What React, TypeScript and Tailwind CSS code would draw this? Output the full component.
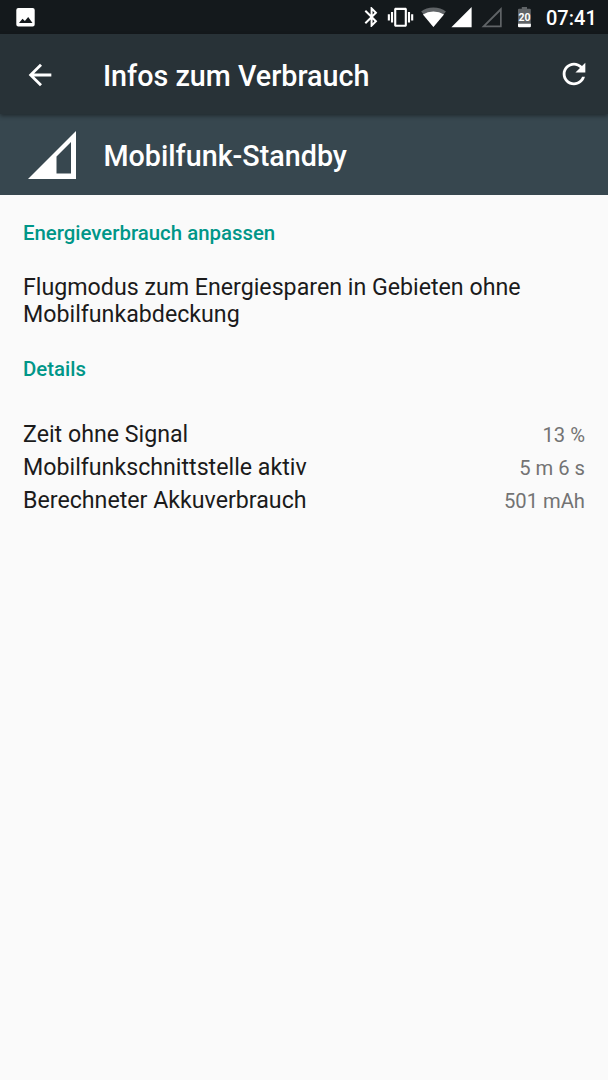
const details = [
  { label: "Zeit ohne Signal", value: "13 %" },
  { label: "Mobilfunkschnittstelle aktiv", value: "5 m 6 s" },
  { label: "Berechneter Akkuverbrauch", value: "501 mAh" },
];

const StatusBar = () => (
  <div className="h-[34px] bg-[#14191c]">
    <svg width="608" height="34" viewBox="0 0 608 34" fill="#fff">
      {/* screenshot notification */}
      <path
        fillRule="evenodd"
        d="M18.3 8h14.4a2 2 0 0 1 2 2v14.4a2 2 0 0 1-2 2H18.3a2 2 0 0 1-2-2V10a2 2 0 0 1 2-2zM19 23h13.5l-4.3-6-3.3 4-2.4-2.3z"
      />
      {/* bluetooth */}
      <path
        transform="translate(359.6 5)"
        d="M17.71 7.71L12 2h-1v7.59L6.41 5 5 6.41 10.59 12 5 17.59 6.41 19 11 14.41V22h1l5.71-5.71-4.3-4.29 4.3-4.29zM13 5.83l1.88 1.88L13 9.59V5.83zm1.88 10.46L13 18.17v-3.76l1.88 1.88z"
      />
      {/* vibrate */}
      <path
        transform="translate(387.8 4.6) scale(1.06)"
        d="M0 15h2V9H0v6zm3 2h2V7H3v10zm19-8v6h2V9h-2zm-3 8h2V7h-2v10zM16.5 3h-9C6.67 3 6 3.67 6 4.5v15c0 .83.67 1.5 1.5 1.5h9c.83 0 1.5-.67 1.5-1.5v-15c0-.83-.67-1.5-1.5-1.5zM16 19H8V5h8v14z"
      />
      {/* wifi */}
      <path fill="#606467" d="M433.4 27L421.2 11.6Q426 7.4 433.4 7.4T445.9 11.6z" />
      <path d="M433.4 27L422.9 14.4Q427.5 11.6 433.4 11.6T444 14.4z" />
      {/* signal, sim 1 and 2 */}
      <path d="M451.4 27.3L471.6 7.1V27.3z" />
      <path
        fill="#606467"
        fillRule="evenodd"
        d="M481.5 27.3L501.7 7.1V27.3zM485.8 25.6H500V11.4z"
      />
      {/* battery */}
      <path fill="#606467" d="M519 8.8h2.8V7.1h5.2v1.7h2.8a1 1 0 0 1 1 1V24H518V9.8a1 1 0 0 1 1-1z" />
      <path d="M518 23.8h12.9v2.5a1 1 0 0 1-1 1H519a1 1 0 0 1-1-1z" />
      <text x="524.5" y="20.8" textAnchor="middle" className="font-[Roboto] text-[10.5px] font-bold">
        20
      </text>
      <text x="546" y="25.2" className="font-[Roboto] text-[20px] font-medium">
        07:41
      </text>
    </svg>
  </div>
);

const AppBar = () => (
  <header className="relative flex h-20 items-center bg-[#283237] pr-[17.5px] pl-[23px] shadow-[0_2px_4px_rgba(0,0,0,0.4)]">
    <svg width="34" height="34" viewBox="0 0 24 24" fill="#fff" className="mt-px">
      <path d="M20 11H7.83l5.59-5.59L12 4l-8 8 8 8 1.41-1.41L7.83 13H20v-2z" />
    </svg>
    <h1 className="ml-[46px] flex-1 pt-[3px] text-[28.7px] leading-8 font-medium">Infos zum Verbrauch</h1>
    <svg width="34" height="34" viewBox="0 0 24 24" fill="#fff">
      <path d="M17.65 6.35C16.2 4.9 14.21 4 12 4c-4.42 0-7.99 3.58-7.99 8s3.57 8 7.99 8c3.73 0 6.84-2.55 7.73-6h-2.08c-.82 2.33-3.04 4-5.65 4-3.31 0-6-2.69-6-6s2.69-6 6-6c1.66 0 3.14.69 4.22 1.78L13 11h7V4l-2.35 2.35z" />
    </svg>
  </header>
);

export default function App() {
  return (
    <div className="flex h-[1080px] w-[608px] flex-col overflow-hidden bg-[#fafafa] font-[Roboto,sans-serif] text-white">
      <StatusBar />
      <AppBar />
      <section className="flex h-[81px] items-center bg-[#37474f] pl-7">
        <svg width="48" height="48" viewBox="0 0 48 48" fill="#fff">
          <path fillRule="evenodd" d="M0 48L48 0V48zM28.5 42.5H43V11L28.5 25.5z" />
        </svg>
        <h2 className="ml-[27.5px] pt-[3px] text-[28.7px] leading-8 font-medium">Mobilfunk-Standby</h2>
      </section>
      <main className="px-[23px] pt-[26px] text-[23.2px] text-[#1b1b1b]">
        <h3 className="text-[20.4px] leading-6 font-medium text-[#009688]">Energieverbrauch anpassen</h3>
        <p className="mt-[29px] leading-[27px]">
          Flugmodus zum Energiesparen in Gebieten ohne
          <br />
          Mobilfunkabdeckung
        </p>
        <h3 className="mt-[29px] text-[20.4px] leading-6 font-medium text-[#009688]">Details</h3>
        <dl className="mt-[37px]">
          {details.map((item) => (
            <div key={item.label} className="flex h-[33px] items-center justify-between">
              <dt>{item.label}</dt>
              <dd className="pt-0.5 text-[20.2px] text-[#737373]">{item.value}</dd>
            </div>
          ))}
        </dl>
      </main>
    </div>
  );
}
